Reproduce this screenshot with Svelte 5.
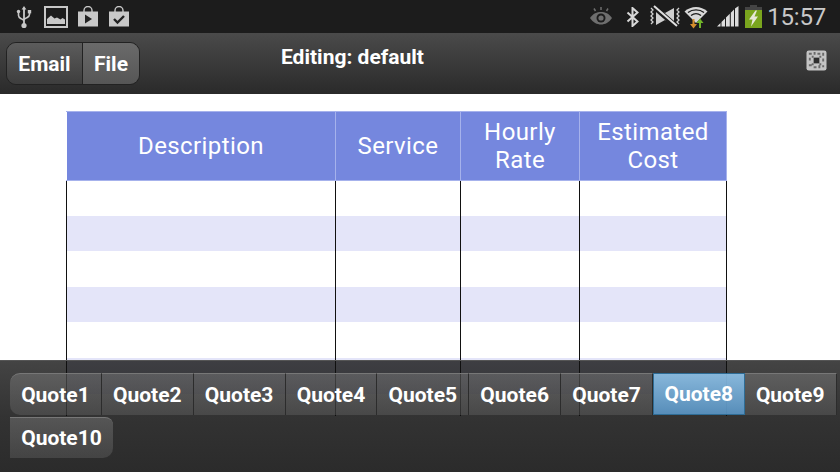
<script lang="ts">
  // tabs along the bottom
  const quotes = ["Quote1", "Quote2", "Quote3", "Quote4", "Quote5", "Quote6", "Quote7", "Quote8", "Quote9"];
  let active = $state("Quote8");

  const rows = [1, 2, 3, 4, 5, 6, 7];
</script>

<div class="screen">
  <div class="status">
    <div class="status-left">
      <svg class="ic-usb" width="16" height="24" viewBox="0 0 16 24">
        <path d="M8 1l2.400 3.400H8.900V20H7.100V4.400H5.600z" fill="#c8c8c8" />
        <circle cx="8" cy="20.500" r="2.600" fill="#c8c8c8" />
        <path d="M2.500 7v3.500c0 2 1.500 2.600 3 3.400l2.500 1.400M13.500 7v2.500c0 2-1.500 2.600-3 3.400L8 14.300" fill="none" stroke="#c8c8c8" stroke-width="1.600" />
        <circle cx="2.500" cy="6.500" r="1.700" fill="#c8c8c8" />
        <rect x="11.800" y="5" width="3.400" height="3.400" fill="#c8c8c8" />
      </svg>
      <svg class="ic-pic" width="24" height="22" viewBox="0 0 24 22">
        <rect x="1" y="1" width="22" height="20" fill="#1c1c1c" stroke="#c8c8c8" stroke-width="2" />
        <path d="M3 18v-5l4-3.500 3.500 3 2.500-1 3.500 2 2-1.500 2.500 1.500V18z" fill="#c8c8c8" />
      </svg>
      <svg class="ic-bag" width="22" height="21" viewBox="0 0 22 21">
        <path d="M7 6V4.500a4 4 0 0 1 8 0V6" fill="none" stroke="#c8c8c8" stroke-width="1.400" />
        <rect x="1" y="5.500" width="20" height="15" fill="#c8c8c8" />
        <path d="M8 8.500l7 4.500-7 4.500z" fill="#222" />
      </svg>
      <svg class="ic-bag" width="22" height="21" viewBox="0 0 22 21">
        <path d="M7 6V4.500a4 4 0 0 1 8 0V6" fill="none" stroke="#c8c8c8" stroke-width="1.400" />
        <rect x="1" y="5.500" width="20" height="15" fill="#c8c8c8" />
        <path d="M6 13l3.500 3.500L16 10" fill="none" stroke="#222" stroke-width="2.400" />
      </svg>
    </div>

    <div class="status-right">
      <svg class="ic-eye" width="24" height="19" viewBox="0 0 24 19">
        <path d="M1 11c3-4.500 7-6 11-6s8 1.500 11 6c-3 4.500-7 6.500-11 6.500S4 15.500 1 11z" fill="#6e6e6e" />
        <circle cx="12" cy="11" r="4.500" fill="#1c1c1c" />
        <circle cx="12" cy="11" r="2.600" fill="#6e6e6e" />
        <path d="M12 0v3M5 1.500l1.500 2.500M19 1.500L17.500 4" stroke="#6e6e6e" stroke-width="1.500" />
      </svg>
      <svg class="ic-bt" width="13" height="20" viewBox="0 0 13 20">
        <path d="M1.500 5.500l10 9-5 4.500V1l5 4.500-10 9" fill="none" stroke="#d8d8d8" stroke-width="2" />
      </svg>
      <svg class="ic-vib" width="32" height="23" viewBox="0 0 32 23">
        <path d="M7 3l9 5 9-5v17l-9-5-9 5z" fill="#d0d0d0" />
        <path d="M4 1l24 21" stroke="#1c1c1c" stroke-width="5" />
        <path d="M5 1l23 20" stroke="#e0e0e0" stroke-width="2" />
        <path d="M2 3l2 2-2 2 2 2-2 2 2 2-2 2 2 2-2 2M30 3l-2 2 2 2-2 2 2 2-2 2 2 2-2 2 2 2" fill="none" stroke="#d0d0d0" stroke-width="1.300" />
      </svg>
      <svg class="ic-wifi" width="24" height="24" viewBox="0 0 24 24">
        <path d="M0.500 6.500C7 0.500 17 0.500 23.500 6.500L12 18z" fill="#d8d8d8" />
        <path d="M4 7.500C8.500 4 15.500 4 20 7.500M7 10.500c3-2.200 7-2.200 10 0" fill="none" stroke="#1c1c1c" stroke-width="1.300" />
        <path d="M8.500 14v5H6l3.500 4.500L13 19h-2.500v-5z" fill="#d68f2c" />
        <path d="M15 23v-5h-2.500l3.500-4.500 3.500 4.500H17v5z" fill="#72b62a" />
      </svg>
      <svg class="ic-signal" width="22" height="21" viewBox="0 0 22 21">
        <path d="M0 20.500l3.500-3.500v3.500zM4.500 20.500V16l3.500-3.500v8zM9 20.500V11.500l3.800-3.800v12.800zM13.800 20.500V6.800L17 3.600v16.900zM18 20.500V2.600L21.500 0v20.500z" fill="#dcdcdc" />
      </svg>
      <svg class="ic-batt" width="17" height="23" viewBox="0 0 17 23">
        <rect x="5" y="0" width="7" height="2.500" fill="#444" />
        <rect x="0" y="2" width="17" height="3" fill="#444" />
        <rect x="0" y="5" width="17" height="18" fill="#7aa51e" />
        <path d="M10.500 5.500L4 14.500h3.500l-1.500 7 7-10H9.500l2.500-6z" fill="#e8e8d8" />
      </svg>
      <span class="clock">15:57</span>
    </div>
  </div>

  <div class="actionbar">
    <div class="btn-group">
      <button class="seg">Email</button>
      <button class="seg seg-on">File</button>
    </div>
    <div class="title">Editing: default</div>
    <svg class="ic-qr" width="21" height="21" viewBox="0 0 22 22">
      <rect x="0.500" y="0.500" width="21" height="21" rx="2.500" fill="#c4c4c4" />
      <path d="M8 8h6v6H8z" fill="#2e2e2e" />
      <path d="M3 3h3v2H3zM8 2h2v3H8zM12 3h3v2h-3zM17 3h2v3h-2zM3 8h2v3H3zM17 9h2v3h-2zM3 15h3v2H3zM8 17h3v2H8zM13 16h2v3h-2zM17 16h2v2h-2zM6 6h2v2H6zM14 6h2v2h-2zM6 14h2v2H6zM14 14h2v2h-2z" fill="#6a6a6a" />
    </svg>
  </div>

  <div class="content">
    <table class="grid">
      <colgroup>
        <col class="c1" />
        <col class="c2" />
        <col class="c3" />
        <col class="c4" />
      </colgroup>
      <thead>
        <tr>
          <th>Description</th>
          <th>Service</th>
          <th>Hourly<br />Rate</th>
          <th>Estimated<br />Cost</th>
        </tr>
      </thead>
      <tbody>
        {#each rows as r}
          <tr class:band={r % 2 === 0} class:last={r === 7}>
            <td></td><td></td><td></td><td></td>
          </tr>
        {/each}
      </tbody>
    </table>
  </div>

  <div class="footer">
    <div class="tabs">
      {#each quotes as q, i}
        <button class="tab" class:first={i === 0} class:on={active === q} onclick={() => (active = q)}>{q}</button>
      {/each}
    </div>
    <div class="tabs">
      <button class="tab wide" class:on={active === "Quote10"} onclick={() => (active = "Quote10")}>Quote10</button>
    </div>
  </div>
</div>

<style>
  :global(body) {
    margin: 0;
    background: #fff;
  }

  .screen {
    position: relative;
    width: 840px;
    height: 472px;
    overflow: hidden;
    font-family: Roboto, "Liberation Sans", sans-serif;
    background: #fff;
  }

  .status {
    height: 33px;
    background: #1c1c1c;
    display: flex;
    justify-content: space-between;
    align-items: center;
  }

  .status svg {
    display: block;
    flex: none;
  }

  .status-left {
    display: flex;
    align-items: center;
    padding-left: 16px;
  }

  .ic-pic {
    margin-left: 12px;
  }

  .ic-bag {
    margin-left: 9px;
  }

  .status-right {
    display: flex;
    align-items: center;
    padding-right: 14px;
  }

  .ic-bt {
    margin-left: 13px;
  }

  .ic-vib {
    margin-left: 10px;
  }

  .ic-wifi {
    margin-left: 3px;
  }

  .ic-signal {
    margin-left: 9px;
  }

  .ic-batt {
    margin-left: 6px;
  }

  .clock {
    margin-left: 5px;
    font-size: 24px;
    color: #c8c8c8;
    letter-spacing: -0.2px;
  }

  .actionbar {
    height: 61px;
    box-sizing: border-box;
    padding: 9px 13px 0 6px;
    background: linear-gradient(#4a4a4a, #2a2a2a);
    display: flex;
    align-items: flex-start;
  }

  .btn-group {
    display: flex;
    height: 43px;
    flex: none;
    border: 1px solid #222;
    border-radius: 10px;
    box-sizing: border-box;
    overflow: hidden;
  }

  .seg {
    border: 0;
    margin: 0;
    padding: 0;
    width: 75px;
    font: bold 21px Roboto, sans-serif;
    color: #fff;
    background: linear-gradient(#5c5c5c, #3d3d3d);
  }

  .seg-on {
    width: 57px;
    border-left: 1px solid #222;
    background: linear-gradient(#6a6a6a, #565656);
  }

  .title {
    margin: 3px 0 0 141px;
    font-size: 21px;
    font-weight: bold;
    color: #fff;
    line-height: 24px;
  }

  .ic-qr {
    margin: 8px 0 0 auto;
    display: block;
  }

  .content {
    padding: 17px 0 0 66px;
  }

  .grid {
    border-collapse: collapse;
    table-layout: fixed;
    width: 660px;
  }

  .c1 {
    width: 269px;
  }

  .c2 {
    width: 125px;
  }

  .c3 {
    width: 119px;
  }

  .c4 {
    width: 147px;
  }

  th {
    height: 68.5px;
    padding: 1px 0 0;
    box-sizing: border-box;
    background: #7587de;
    border: 1px solid #a6b2ec;
    color: #fff;
    font-weight: normal;
    font-size: 24px;
    line-height: 28px;
    letter-spacing: 0.4px;
  }

  th:first-child {
    border-left-color: #fff;
  }

  td {
    height: 35.6px;
    padding: 0;
    box-sizing: border-box;
    border-left: 1px solid #111;
    border-right: 1px solid #111;
  }

  .band td {
    background: #e4e5f9;
  }

  .last td {
    height: 22px;
  }

  .footer {
    position: absolute;
    left: 0;
    right: 0;
    bottom: 0;
    height: 112px;
    box-sizing: border-box;
    padding: 12px 0 0 10px;
    background: linear-gradient(rgba(15, 15, 15, 0.78), rgba(15, 15, 15, 0.85) 50%, rgba(20, 20, 20, 0.9));
    border-top: 1px solid #555;
    display: flex;
    flex-direction: column;
    gap: 2px;
  }

  .tabs {
    display: flex;
  }

  .tab {
    width: 91.85px;
    height: 42px;
    flex: none;
    margin: 0;
    padding: 0;
    border: 0;
    border-right: 1px solid #2c2c2c;
    border-top: 1px solid #777;
    box-sizing: border-box;
    font: bold 21px Roboto, sans-serif;
    color: #fff;
    background: linear-gradient(rgba(150, 150, 150, 0.35), rgba(120, 120, 120, 0.3));
  }

  .tab.first {
    border-radius: 10px 0 0 10px;
  }

  .tab.on {
    background: linear-gradient(rgba(146, 200, 240, 0.88), rgba(92, 154, 204, 0.88));
    border: 1px solid #2f6d96;
  }

  .tab.wide {
    width: 103px;
    height: 41px;
    border-radius: 0 8px 10px 0;
    border-right: 0;
  }
</style>
